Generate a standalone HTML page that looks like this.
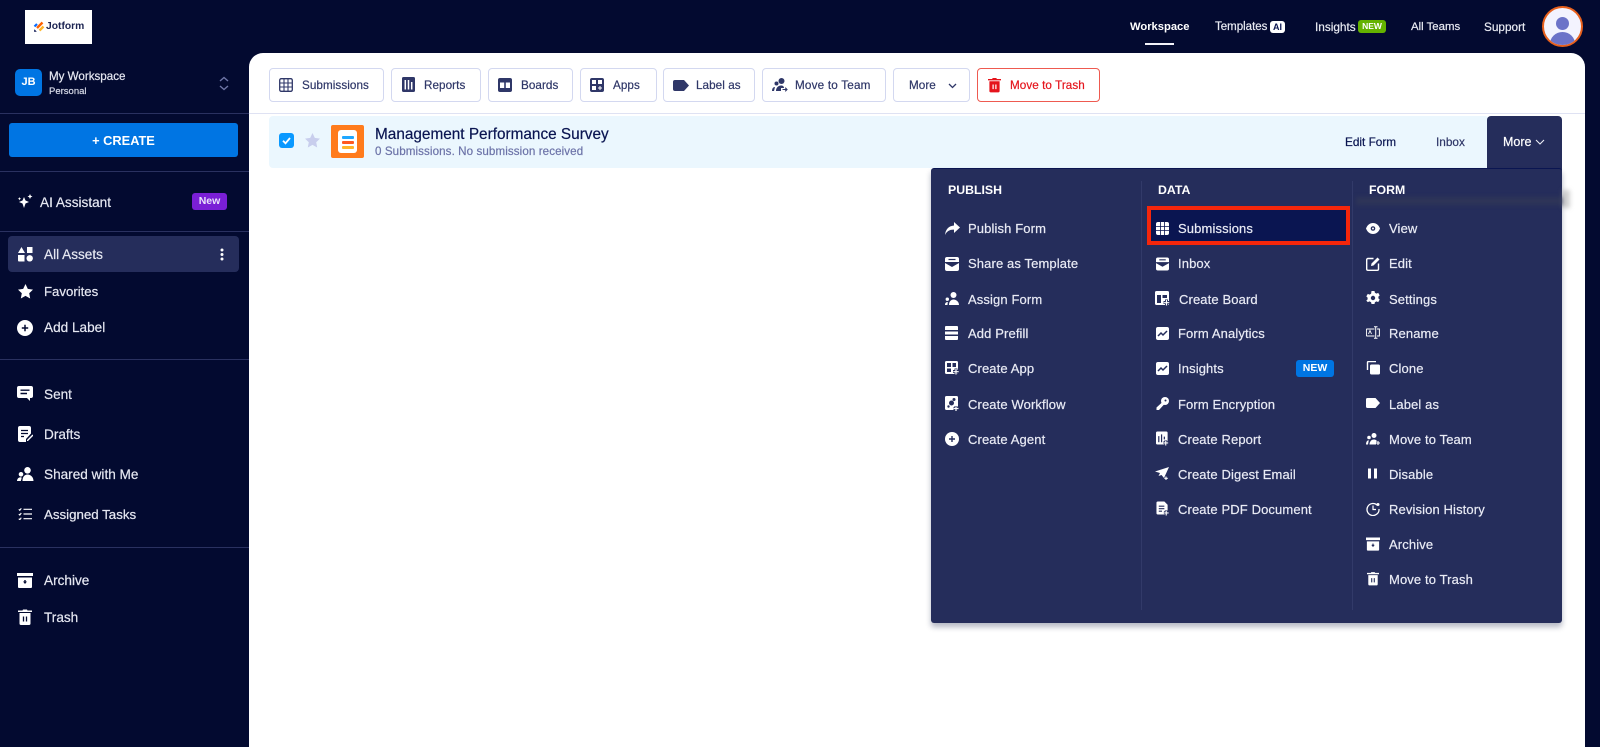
<!DOCTYPE html>
<html style="background:#030a30"><head><meta charset="utf-8"><title>Jotform</title>
<style>
html,body{margin:0;padding:0}
body{width:1600px;height:747px;overflow:hidden;background:#030a30;position:relative;font-family:"Liberation Sans",sans-serif;color:#eceef6;filter:blur(.3px)}
.a,.t,svg{position:absolute}
.t{line-height:20px;white-space:nowrap;-webkit-text-stroke:.2px currentColor}
.s{font-size:13.6px;color:#e6e8f2}
.n{font-size:11.8px;color:#e9ebf3}
.b{font-size:11.7px;letter-spacing:.06px;color:#2f3768}
.m{font-size:13px;letter-spacing:.12px;color:#e9ebf5}
.h{font-size:12.3px;font-weight:bold;color:#fff;-webkit-text-stroke:0}
.btn{position:absolute;top:68px;height:32px;border:1px solid #d3d8f0;border-radius:4px;background:#fff}
.d{position:absolute;left:0;width:249px;height:1px;background:#2a3160}
.v{position:absolute;width:1px;top:181px;height:429px;background:#323a69}
svg{fill:currentColor}
</style></head><body>

<!-- logo -->
<div class="a" style="left:25px;top:10px;width:67px;height:34px;background:#fff"></div>
<svg style="left:33px;top:21px" width="12" height="12" viewBox="0 0 12 12"><path d="M1.500 5.500L4 3" stroke="#0a6cff" stroke-width="2.200" fill="none"/><path d="M4 7L9.500 1.500" stroke="#ff6100" stroke-width="2.400" fill="none"/><path d="M6.500 9.500L10.500 5.500" stroke="#ffb629" stroke-width="2.400" fill="none"/><path d="M1 10.800h2.800L1.400 8.300z" fill="#0a1551"/></svg>
<div class="t" style="left:46px;top:17px;font-size:10.300px;font-weight:bold;color:#1c2452;-webkit-text-stroke:0">Jotform</div>

<!-- top nav -->
<div class="t n" style="left:1130px;top:17px;color:#fff;font-weight:bold;font-size:11.200px;-webkit-text-stroke:0">Workspace</div>
<div class="a" style="left:1145px;top:43px;width:29px;height:2px;background:#f3f3fa"></div>
<div class="t n" style="left:1215px;top:17px;font-size:11.500px">Templates</div>
<div class="a" style="left:1270px;top:21px;width:15px;height:12px;background:#fff;border-radius:3px;color:#0a1551;font:bold 9px/12px 'Liberation Sans',sans-serif;text-align:center">AI</div>
<div class="t n" style="left:1315px;top:17px">Insights</div>
<div class="a" style="left:1358px;top:20px;width:28px;height:13px;background:#64b200;border-radius:3px;color:#fff;font:bold 8.500px/13px 'Liberation Sans',sans-serif;text-align:center">NEW</div>
<div class="t n" style="left:1411px;top:17px;font-size:11.400px">All Teams</div>
<div class="t n" style="left:1484px;top:17px">Support</div>
<div class="a" style="left:1542px;top:6px;width:37px;height:37px;border:2px solid #e8601c;border-radius:50%;background:#f3f3fe;overflow:hidden">
  <div class="a" style="left:12px;top:9px;width:13px;height:13px;border-radius:50%;background:#6c73c8"></div>
  <div class="a" style="left:6px;top:24px;width:25px;height:24px;border-radius:50%;background:#6c73c8"></div>
</div>

<!-- sidebar -->
<div class="a" style="left:15px;top:69px;width:27px;height:27px;border-radius:5px;background:#0075e3;color:#fff;font:bold 11px/27px 'Liberation Sans',sans-serif;text-align:center">JB</div>
<div class="t" style="left:49px;top:67px;font-size:11.600px;color:#e6e8f2">My Workspace</div>
<div class="t" style="left:49px;top:82px;font-size:9.500px;color:#d8dbe8">Personal</div>
<svg style="left:219px;top:76px;color:#6f76a7" width="10" height="15" viewBox="0 0 10 15"><path d="M1 5l4-3.500L9 5M1 10l4 3.500L9 10" fill="none" stroke="currentColor" stroke-width="1.400"/></svg>
<div class="d" style="top:113px"></div>
<div class="a" style="left:9px;top:123px;width:229px;height:34px;background:#0075e3;border-radius:3px;color:#fff;font:bold 12.800px/36px 'Liberation Sans',sans-serif;text-align:center">+ CREATE</div>
<div class="d" style="top:171px"></div>

<svg style="left:17px;top:193px;color:#fff" width="16" height="16" viewBox="0 0 16 16"><path d="M7 4l1.500 3.500L12 9l-3.500 1.500L7 15l-1.500-4.500L2 9l3.500-1.500zM13 1l.8 1.700 1.700.8-1.700.8L13 6l-.8-1.700-1.700-.8 1.700-.8zM2.500 4l.5 1.200 1.200.5-1.200.5-.5 1.200L2 6.200.8 5.700 2 5.200z"/></svg>
<div class="t s" style="left:40px;top:192px;margin-top:1px">AI Assistant</div>
<div class="a" style="left:192px;top:193px;width:35px;height:17px;background:#7a1fd6;border-radius:3px;color:#e9e4fa;font:bold 10.500px/17px 'Liberation Sans',sans-serif;text-align:center">New</div>
<div class="d" style="top:231px"></div>

<div class="a" style="left:8px;top:236px;width:231px;height:36px;background:#252d5b;border-radius:4px"></div>
<svg style="left:18px;top:247px;color:#fff" width="15" height="15" viewBox="0 0 15 15"><path d="M3.500 0L7 6H0zM9 0h5.500v6H9zM0 8h6.500v6.500H1a1 1 0 0 1-1-1z"/><circle cx="11.700" cy="11.300" r="3.200"/></svg>
<div class="t s" style="left:44px;top:245px">All Assets</div>
<svg style="left:220px;top:248px;color:#fff" width="4" height="13" viewBox="0 0 4 13"><circle cx="2" cy="2" r="1.500"/><circle cx="2" cy="6.500" r="1.500"/><circle cx="2" cy="11" r="1.500"/></svg>

<svg style="left:18px;top:284px;color:#fff" width="15" height="15" viewBox="0 0 15 15"><path d="M7.500 0l2.300 4.900 5.200.7-3.800 3.600 1 5.300-4.700-2.600-4.700 2.600 1-5.300L0 5.600l5.200-.7z"/></svg>
<div class="t s" style="left:44px;top:282px;font-size:13.200px">Favorites</div>
<svg style="left:17px;top:320px" width="16" height="16" viewBox="0 0 16 16"><circle cx="8" cy="8" r="8" fill="#fff"/><path d="M8 4.800v6.400M4.800 8h6.400" stroke="#030a30" stroke-width="1.500"/></svg>
<div class="t s" style="left:44px;top:318px">Add Label</div>
<div class="d" style="top:359px"></div>

<svg style="left:17px;top:386px" width="16" height="15" viewBox="0 0 16 15"><path d="M2 0h12a2 2 0 0 1 2 2v8a2 2 0 0 1-2 2h-1v3l-3-3H2a2 2 0 0 1-2-2V2a2 2 0 0 1 2-2z" fill="#fff"/><path d="M3.500 4.200h9M3.500 7.500h6.500" stroke="#030a30" stroke-width="1.400"/></svg>
<div class="t s" style="left:44px;top:385px">Sent</div>
<svg style="left:18px;top:426px" width="15" height="16" viewBox="0 0 15 16"><path d="M2 0h9a2 2 0 0 1 2 2v5.500L8 13v3H2a2 2 0 0 1-2-2V2a2 2 0 0 1 2-2z" fill="#fff"/><path d="M3 4.500h7M3 7.500h7M3 10.500h3" stroke="#030a30" stroke-width="1.300"/><path d="M9 14l5.500-5.500 1 1L10 15H9z" fill="#fff"/></svg>
<div class="t s" style="left:44px;top:425px">Drafts</div>
<svg style="left:17px;top:467px;color:#fff" width="17" height="14" viewBox="0 0 17 14"><circle cx="10.500" cy="3.300" r="3.300"/><path d="M5.500 14c0-4 2-6.500 5-6.500s6 2.500 6 6.500zM4 5a2.300 2.300 0 1 1 0 4.600A2.300 2.300 0 0 1 4 5zM0 14c0-2 1.500-3.800 3.500-3.800 1 0 1.200.5 1.200.5L3.800 14z"/></svg>
<div class="t s" style="left:44px;top:465px">Shared with Me</div>
<svg style="left:18px;top:508px;color:#fff" width="14" height="12" viewBox="0 0 14 12"><path d="M5.500 1.300H14M5.500 6H14M5.500 10.700H14" stroke="#fff" stroke-width="1.200" fill="none"/><path d="M.8 1.300l1 1 1.500-2M.8 6l1 1 1.500-2M.8 10.700l1 1 1.500-2" stroke="#fff" stroke-width="1.100" fill="none"/></svg>
<div class="t s" style="left:44px;top:505px;font-size:13.300px">Assigned Tasks</div>
<div class="d" style="top:547px"></div>

<svg style="left:17px;top:573px" width="16" height="15" viewBox="0 0 16 15"><path d="M0 0h16v3H0zM1 4.500h14V14a1 1 0 0 1-1 1H2a1 1 0 0 1-1-1z" fill="#fff"/><path d="M6 8.500h4L8 11z M7.300 7h1.400v2H7.300z" fill="#030a30"/></svg>
<div class="t s" style="left:44px;top:571px">Archive</div>
<svg style="left:18px;top:609px" width="14" height="16" viewBox="0 0 14 16"><path d="M0 1.500h4.500L5 .5h4l.5 1H14V3H0zM1.500 4h11v10.500a1.500 1.500 0 0 1-1.500 1.500H3a1.500 1.500 0 0 1-1.500-1.500z" fill="#fff"/><path d="M5.500 7.500v5M8.500 7.500v5" stroke="#030a30" stroke-width="1.300"/></svg>
<div class="t s" style="left:44px;top:608px">Trash</div>

<!-- main panel -->
<div class="a" style="left:249px;top:53px;width:1336px;height:694px;background:#fff;border-radius:14px 14px 0 0"></div>
<div class="a" style="left:249px;top:113px;width:1336px;height:1px;background:#dfe2f3"></div>

<!-- toolbar -->
<div class="btn" style="left:269px;width:113px"></div>
<svg style="left:279px;top:78px;color:#2f3768" width="14" height="14" viewBox="0 0 14 14"><rect x=".7" y=".7" width="12.600" height="12.600" rx="1.500" fill="none" stroke="currentColor" stroke-width="1.300"/><path d="M5 1v12M9 1v12M1 5h12M1 9h12" stroke="currentColor" stroke-width="1.100" fill="none"/></svg>
<div class="t b" style="left:302px;top:76px">Submissions</div>

<div class="btn" style="left:391px;width:88px"></div>
<svg style="left:402px;top:77px;color:#2f3768" width="13" height="15" viewBox="0 0 13 15"><rect width="13" height="15" rx="1.500"/><path d="M3.300 3v9.500M6.500 3v9.500M9.700 5v7.500" stroke="#fff" stroke-width="1.500"/></svg>
<div class="t b" style="left:424px;top:76px">Reports</div>

<div class="btn" style="left:488px;width:83px"></div>
<svg style="left:498px;top:78px;color:#2f3768" width="14" height="14" viewBox="0 0 14 14"><rect width="14" height="14" rx="2"/><path d="M2 4.500h4.200v5.500H2zM7.800 4.500H12v5.500H7.800z" fill="#fff"/></svg>
<div class="t b" style="left:521px;top:76px">Boards</div>

<div class="btn" style="left:580px;width:75px"></div>
<svg style="left:590px;top:78px;color:#2f3768" width="14" height="14" viewBox="0 0 14 14"><rect width="14" height="14" rx="2"/><path d="M2 2h4v4H2zM8 2h4v4H8zM2 8h4v4H2zM9.500 8h1v1.500H12v1h-1.500V12h-1v-1.500H8v-1h1.500z" fill="#fff"/></svg>
<div class="t b" style="left:613px;top:76px">Apps</div>

<div class="btn" style="left:663px;width:90px"></div>
<svg style="left:673px;top:80px;color:#2f3768" width="16" height="11" viewBox="0 0 16 11"><path d="M2 0h9l5 5.500L11 11H2a2 2 0 0 1-2-2V2a2 2 0 0 1 2-2z"/></svg>
<div class="t b" style="left:696px;top:76px">Label as</div>

<div class="btn" style="left:762px;width:122px"></div>
<svg style="left:772px;top:78px;color:#2f3768" width="16" height="14" viewBox="0 0 16 14"><circle cx="9.500" cy="3" r="3"/><circle cx="4.500" cy="5.500" r="2"/><path d="M4 13c0-3 2-5.500 5-5.500 2 0 3 1 3 2.500H9v3zM0 13c0-2.500 1-4 3-4l-1 4z"/><path d="M10.500 11.500h4.500M13.200 9.700l1.800 1.800-1.800 1.800" fill="none" stroke="currentColor" stroke-width="1.100"/></svg>
<div class="t b" style="left:795px;top:76px;letter-spacing:.2px">Move to Team</div>

<div class="btn" style="left:893px;width:75px"></div>
<div class="t b" style="left:909px;top:76px">More</div>
<svg style="left:948px;top:83px;color:#2f3768" width="9" height="6" viewBox="0 0 9 6"><path d="M1 1l3.500 3.500L8 1" fill="none" stroke="currentColor" stroke-width="1.300"/></svg>

<div class="btn" style="left:977px;width:121px;border-color:#ee5a50"></div>
<svg style="left:988px;top:77px" width="13" height="16" viewBox="0 0 14 16"><path d="M0 1.500h4.500L5 .5h4l.5 1H14V3H0zM1.500 4h11v10.500a1.500 1.500 0 0 1-1.500 1.500H3a1.500 1.500 0 0 1-1.500-1.500z" fill="#e5141c"/><path d="M5.500 7.500v5M8.500 7.500v5" stroke="#fff" stroke-width="1.300"/></svg>
<div class="t b" style="left:1010px;top:76px;color:#e5141c">Move to Trash</div>

<!-- row -->
<div class="a" style="left:269px;top:116px;width:1220px;height:52px;background:#ebf7fe;border-radius:4px"></div>
<div class="a" style="left:279px;top:133px;width:15px;height:15px;background:#0a99ff;border-radius:3px"></div>
<svg style="left:279px;top:133px" width="15" height="15" viewBox="0 0 15 15"><path d="M4 7.800l2.500 2.500L11 5" fill="none" stroke="#fff" stroke-width="1.800"/></svg>
<svg style="left:305px;top:133px;color:#c8ceed" width="15" height="15" viewBox="0 0 15 15"><path d="M7.500 0l2.300 4.900 5.200.7-3.800 3.600 1 5.300-4.700-2.600-4.700 2.600 1-5.300L0 5.600l5.200-.7z"/></svg>
<div class="a" style="left:331px;top:125px;width:33px;height:33px;background:#ff7b1c;border-radius:2px"></div>
<div class="a" style="left:338px;top:130px;width:19px;height:23px;background:#fff;border-radius:3px"></div>
<div class="a" style="left:342px;top:136px;width:12px;height:3px;background:#1fa7ff;border-radius:1px"></div>
<div class="a" style="left:342px;top:141px;width:12px;height:3px;background:#ff5a1f;border-radius:1px"></div>
<div class="a" style="left:342px;top:146px;width:12px;height:3px;background:#ffb629;border-radius:1px"></div>
<div class="t" style="left:375px;top:125px;font-size:15.350px;color:#0a1551">Management Performance Survey</div>
<div class="t" style="left:375px;top:142px;font-size:11.600px;letter-spacing:.09px;color:#6c73a8">0 Submissions. No submission received</div>
<div class="t" style="left:1345px;top:132px;font-size:11.800px;color:#0a1551">Edit Form</div>
<div class="t" style="left:1436px;top:132px;font-size:11.800px;color:#2f3768">Inbox</div>

<!-- more tab + menu -->
<div class="a" style="left:1487px;top:116px;width:75px;height:60px;background:#252d5b;border-radius:4px 4px 0 0"></div>
<div class="t" style="left:1503px;top:132px;font-size:12.500px;color:#fff">More</div>
<svg style="left:1535px;top:139px;color:#eceef6" width="10" height="6" viewBox="0 0 10 6"><path d="M1 1l4 4 4-4" fill="none" stroke="currentColor" stroke-width="1.100"/></svg>
<div class="a" style="left:931px;top:168px;width:631px;height:455px;background:#252d5b;border-radius:3px;border-top:1px solid #0a1551;box-sizing:border-box;box-shadow:0 4px 6px rgba(10,20,60,.3)"></div>
<div class="a" style="left:1356px;top:197px;width:206px;height:8px;background:#2e3558;filter:blur(2px)"></div>
<div class="a" style="left:1562px;top:190px;width:8px;height:18px;background:rgba(120,120,120,.35);filter:blur(2.500px)"></div>
<div class="v" style="left:1141px"></div>
<div class="v" style="left:1352px"></div>

<div class="t h" style="left:948px;top:180px">PUBLISH</div>
<div class="t h" style="left:1158px;top:180px">DATA</div>
<div class="t h" style="left:1369px;top:180px">FORM</div>

<!-- red box -->
<div class="a" style="left:1147px;top:206px;width:203px;height:39px;box-sizing:border-box;border:4px solid #f5260b;background:#0a1551"></div>

<!-- col 1 -->
<svg style="left:945px;top:222px;color:#fff" width="15" height="13" viewBox="0 0 15 13"><path d="M9 0l6 5.500L9 11V7.700C5 7.500 2 9 0 13c.5-5.500 3.500-9 9-9.500z"/></svg>
<div class="t m" style="left:968px;top:219px">Publish Form</div>
<svg style="left:945px;top:257px" width="14" height="14" viewBox="0 0 14 14"><path d="M2 0h10a2 2 0 0 1 2 2v3H0V2a2 2 0 0 1 2-2z" fill="#fff"/><path d="M0 6l7 4 7-4v6a2 2 0 0 1-2 2H2a2 2 0 0 1-2-2z" fill="#fff"/><path d="M3.500 2.500h7" stroke="#252d5b" stroke-width="1.200"/></svg>
<div class="t m" style="left:968px;top:254px">Share as Template</div>
<svg style="left:945px;top:292px;color:#fff" width="14" height="13" viewBox="0 0 14 13"><circle cx="8.500" cy="3" r="3"/><path d="M4 13c0-3.500 2-5.500 4.500-5.500S14 9.500 14 13zM2.300 5.500a1.700 1.700 0 1 1 0 3.400 1.700 1.700 0 0 1 0-3.400zM0 13c0-1.800.8-3 2.800-3L2.500 13z"/></svg>
<div class="t m" style="left:968px;top:290px">Assign Form</div>
<svg style="left:945px;top:326px" width="13" height="14" viewBox="0 0 13 14"><path d="M1 0h11a1 1 0 0 1 1 1v3H0V1a1 1 0 0 1 1-1zM0 5.500h13V8.500H0zM0 10h13v3a1 1 0 0 1-1 1H1a1 1 0 0 1-1-1z" fill="#fff"/></svg>
<div class="t m" style="left:968px;top:324px">Add Prefill</div>
<svg style="left:945px;top:361px" width="14" height="14" viewBox="0 0 14 14"><rect width="13" height="13" rx="1.500" fill="#fff"/><path d="M2 2h4v4H2zM7.500 2H11v4H7.500zM2 7.500h4V11H2z" fill="#252d5b"/><path d="M11 7.500v6M8 10.500h6" stroke="#252d5b" stroke-width="3"/><path d="M11 8v5.500M8.300 10.700h5.400" stroke="#fff" stroke-width="1.200"/></svg>
<div class="t m" style="left:968px;top:359px">Create App</div>
<svg style="left:945px;top:396px" width="14" height="15" viewBox="0 0 14 15"><rect width="13" height="14" rx="1.500" fill="#fff"/><circle cx="6.500" cy="7" r="2.500" fill="#252d5b"/><circle cx="9" cy="3.500" r="1.500" fill="#252d5b"/><circle cx="3.500" cy="10.500" r="1.200" fill="#252d5b"/><path d="M11 10v5M8.500 12.500h5" stroke="#252d5b" stroke-width="3"/><path d="M11 10.300v4.700M8.700 12.500h4.800" stroke="#fff" stroke-width="1.200"/></svg>
<div class="t m" style="left:968px;top:395px">Create Workflow</div>
<svg style="left:945px;top:432px" width="14" height="14" viewBox="0 0 14 14"><circle cx="7" cy="7" r="7" fill="#fff"/><path d="M7 4v6M4 7h6" stroke="#252d5b" stroke-width="1.400"/></svg>
<div class="t m" style="left:968px;top:430px">Create Agent</div>

<!-- col 2 -->
<svg style="left:1156px;top:222px" width="13" height="13" viewBox="0 0 13 13"><rect width="13" height="13" rx="2" fill="#fff"/><path d="M4.500 0v13M8.500 0v13M0 4.500h13M0 8.500h13" stroke="#0a1551" stroke-width=".8"/></svg>
<div class="t m" style="left:1178px;top:219px">Submissions</div>
<svg style="left:1156px;top:257px" width="13" height="14" viewBox="0 0 14 14"><path d="M2 0h10a2 2 0 0 1 2 2v3H0V2a2 2 0 0 1 2-2z" fill="#fff"/><path d="M0 6l7 4 7-4v6a2 2 0 0 1-2 2H2a2 2 0 0 1-2-2z" fill="#fff"/><path d="M3.500 2.500h7" stroke="#252d5b" stroke-width="1.200"/></svg>
<div class="t m" style="left:1178px;top:254px">Inbox</div>
<svg style="left:1155px;top:291px" width="15" height="15" viewBox="0 0 15 15"><rect width="14" height="14" rx="1.500" fill="#fff"/><path d="M2 4h4v8H2zM7.500 4H12v3H7.500z" fill="#252d5b"/><path d="M11.500 8.500v6M8.500 11.500h6" stroke="#252d5b" stroke-width="3"/><path d="M11.500 9v5.500M8.800 11.700h5.500" stroke="#fff" stroke-width="1.200"/></svg>
<div class="t m" style="left:1179px;top:290px">Create Board</div>
<svg style="left:1156px;top:327px" width="13" height="13" viewBox="0 0 13 13"><rect width="13" height="13" rx="2" fill="#fff"/><path d="M2 9l3-3 2 2 4-4" fill="none" stroke="#252d5b" stroke-width="1.500"/></svg>
<div class="t m" style="left:1178px;top:324px">Form Analytics</div>
<svg style="left:1156px;top:362px" width="13" height="13" viewBox="0 0 13 13"><rect width="13" height="13" rx="2" fill="#fff"/><path d="M2 9l3-3 2 2 4-4" fill="none" stroke="#252d5b" stroke-width="1.500"/></svg>
<div class="t m" style="left:1178px;top:359px">Insights</div>
<div class="a" style="left:1296px;top:360px;width:38px;height:17px;background:#0075e3;border-radius:3px;color:#fff;font:bold 10.500px/17px 'Liberation Sans',sans-serif;text-align:center">NEW</div>
<svg style="left:1156px;top:397px;color:#fff" width="13" height="13" viewBox="0 0 13 13"><circle cx="9" cy="4" r="4"/><path d="M6.500 5l2 2L3 13H.5v-2.500z"/><circle cx="9.500" cy="3.500" r="1" fill="#252d5b"/></svg>
<div class="t m" style="left:1178px;top:395px">Form Encryption</div>
<svg style="left:1156px;top:431px" width="13" height="15" viewBox="0 0 14 15"><rect width="12.500" height="14" rx="1.500" fill="#fff"/><path d="M3 5v6.500M6 3v8.500M9 5.500v3" stroke="#252d5b" stroke-width="1.300"/><path d="M10.500 9.500v5M8 12h5" stroke="#252d5b" stroke-width="3"/><path d="M10.500 10v5M8.300 12.300h4.800" stroke="#fff" stroke-width="1.200"/></svg>
<div class="t m" style="left:1178px;top:430px">Create Report</div>
<svg style="left:1155px;top:467px;color:#fff" width="14" height="13" viewBox="0 0 14 13"><path d="M14 0L9 11 6.500 8 3.500 9 5 6 0 4.500zM6 6l4-2.500L7.500 7.500z"/><path d="M11 9.500v3.500M9.300 11.300h3.500" stroke="#fff" stroke-width="1.100"/></svg>
<div class="t m" style="left:1178px;top:465px">Create Digest Email</div>
<svg style="left:1156px;top:501px" width="13" height="15" viewBox="0 0 14 15"><path d="M2 0h7l3.500 3.500V14H2a1.500 1.500 0 0 1-1.500-1.500v-11A1.500 1.500 0 0 1 2 0z" fill="#fff"/><path d="M3 5h6M3 7.700h6M3 10.400h3.500" stroke="#252d5b" stroke-width="1.100"/><path d="M11 9.500v5M8.500 12h5" stroke="#252d5b" stroke-width="3"/><path d="M11 10v5M8.800 12.300h4.800" stroke="#fff" stroke-width="1.200"/></svg>
<div class="t m" style="left:1178px;top:500px">Create PDF Document</div>

<!-- col 3 -->
<svg style="left:1366px;top:223px" width="14" height="11" viewBox="0 0 14 11"><path d="M7 0c3.200 0 5.800 2.200 7 5.500C12.800 8.800 10.200 11 7 11S1.200 8.800 0 5.500C1.200 2.200 3.800 0 7 0z" fill="#fff"/><circle cx="7" cy="5.500" r="2.300" fill="#252d5b"/><circle cx="7" cy="5.500" r="1" fill="#fff"/></svg>
<div class="t m" style="left:1389px;top:219px">View</div>
<svg style="left:1366px;top:257px" width="14" height="14" viewBox="0 0 14 14"><path d="M7.500 1.500H2A1.300 1.300 0 0 0 .7 2.800v9.200A1.300 1.300 0 0 0 2 13.300h9.200a1.300 1.300 0 0 0 1.300-1.300V6.500" fill="none" stroke="#fff" stroke-width="1.400"/><path d="M5 9l.5-2.500L11.500.5l2 2-6 6z" fill="#fff"/></svg>
<div class="t m" style="left:1389px;top:254px">Edit</div>
<svg style="left:1366px;top:291px" width="14" height="14" viewBox="0 0 14 14"><path d="M5.500 0h3l.4 1.800 1.600.8 1.700-.7 1.500 2.500-1.300 1.200v1.800l1.300 1.200-1.500 2.500-1.700-.7-1.600.8-.4 1.800h-3l-.4-1.800-1.600-.8-1.700.7L.3 9.600l1.300-1.200V6.600L.3 5.400l1.500-2.500 1.700.7 1.600-.8z" fill="#fff"/><circle cx="7" cy="7" r="2.200" fill="#252d5b"/></svg>
<div class="t m" style="left:1389px;top:290px">Settings</div>
<svg style="left:1366px;top:326px" width="14" height="13" viewBox="0 0 14 13"><path d="M8.500 3H1a.6.6 0 0 0-.6.600v5.800A.6.600 0 0 0 1 10h7.500M11 3h2.400v7H11M9.700 1v11M8 .7h3.500M8 12.300h3.500" fill="none" stroke="#fff" stroke-width="1"/><path d="M2.500 8l1.500-3.500L5.500 8" fill="none" stroke="#fff" stroke-width=".9"/></svg>
<div class="t m" style="left:1389px;top:324px">Rename</div>
<svg style="left:1366px;top:361px" width="14" height="14" viewBox="0 0 14 14"><path d="M1.500 9V1.500a1 1 0 0 1 1-1H10" fill="none" stroke="#fff" stroke-width="1.400"/><rect x="4" y="3.500" width="10" height="10" rx="1.500" fill="#fff"/></svg>
<div class="t m" style="left:1389px;top:359px">Clone</div>
<svg style="left:1366px;top:398px" width="14" height="10" viewBox="0 0 14 10"><path d="M1.500 0h8L14 5l-4.500 5h-8A1.500 1.500 0 0 1 0 8.500v-7A1.500 1.500 0 0 1 1.500 0z" fill="#fff"/></svg>
<div class="t m" style="left:1389px;top:395px">Label as</div>
<svg style="left:1366px;top:433px;color:#fff" width="14" height="12" viewBox="0 0 14 12"><circle cx="8" cy="2.500" r="2.500"/><circle cx="3" cy="4.500" r="1.800"/><path d="M3.500 11.500c0-2.500 1.500-5 4.500-5 1.500 0 2.500.7 3 1.800l-1 .7v2.500zM0 11.500C0 9.500.8 7.300 2.800 7.300L2 11.500z"/><path d="M12 8v4M10 10h4" stroke="#fff" stroke-width="1.100"/></svg>
<div class="t m" style="left:1389px;top:430px">Move to Team</div>
<svg style="left:1368px;top:468px" width="9" height="11" viewBox="0 0 9 11"><path d="M0 .5h3v10H0zM6 .5h3v10H6z" fill="#fff"/></svg>
<div class="t m" style="left:1389px;top:465px">Disable</div>
<svg style="left:1366px;top:502px" width="14" height="14" viewBox="0 0 14 14"><path d="M11.500 3.500A6 6 0 1 0 13 7" fill="none" stroke="#fff" stroke-width="1.300"/><path d="M7 3.500V7.500h3" fill="none" stroke="#fff" stroke-width="1.200"/><circle cx="12" cy="2.500" r="1.500" fill="#fff"/></svg>
<div class="t m" style="left:1389px;top:500px">Revision History</div>
<svg style="left:1366px;top:537px" width="14" height="14" viewBox="0 0 16 15"><path d="M0 0h16v3H0zM1 4.500h14V14a1 1 0 0 1-1 1H2a1 1 0 0 1-1-1z" fill="#fff"/><path d="M6 8.500h4L8 11z M7.300 7h1.400v2H7.300z" fill="#252d5b"/></svg>
<div class="t m" style="left:1389px;top:535px">Archive</div>
<svg style="left:1367px;top:571px" width="12" height="15" viewBox="0 0 14 16"><path d="M0 1.500h4.500L5 .5h4l.5 1H14V3H0zM1.500 4h11v10.500a1.500 1.500 0 0 1-1.500 1.500H3a1.500 1.500 0 0 1-1.500-1.500z" fill="#fff"/><path d="M5.500 7.500v5M8.500 7.500v5" stroke="#252d5b" stroke-width="1.300"/></svg>
<div class="t m" style="left:1389px;top:570px">Move to Trash</div>

</body></html>
